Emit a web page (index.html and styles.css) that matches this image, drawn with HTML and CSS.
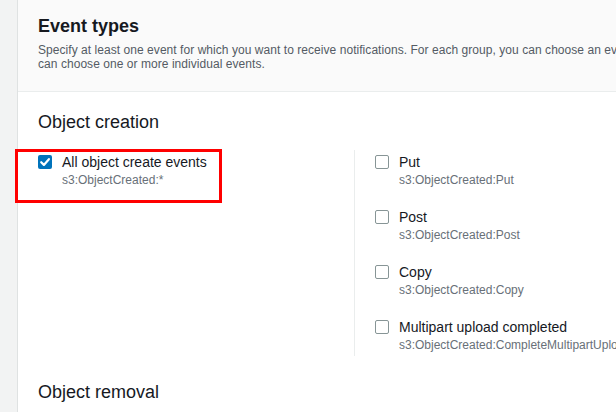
FILE: index.html
```html
<!DOCTYPE html>
<html>
<head>
<meta charset="utf-8">
<link rel="stylesheet" href="styles.css">
</head>
<body>
<div class="page">
  <div class="rail"></div>
  <div class="card">
    <div class="card-header">
      <h2 class="title">Event types</h2>
      <p class="desc">Specify at least one event for which you want to receive notifications. For each group, you can choose an event type for all events, or you<br>can choose one or more individual events.</p>
    </div>
    <div class="section">
      <h3 class="group-title">Object creation</h3>
      <div class="group-grid">
        <div class="col col-left">
          <div class="option highlighted">
            <span class="box checked"><svg width="14" height="14" viewBox="0 0 14 14"><polyline points="3.2,7.2 5.9,9.9 10.9,4.2" fill="none" stroke="#fff" stroke-width="2.2" stroke-linecap="round" stroke-linejoin="round"/></svg></span>
            <div class="text"><div class="label">All object create events</div><div class="sub">s3:ObjectCreated:*</div></div>
            <span class="annotation"></span>
          </div>
        </div>
        <div class="col col-right">
          <div class="option">
            <span class="box"></span>
            <div class="text"><div class="label">Put</div><div class="sub">s3:ObjectCreated:Put</div></div>
          </div>
          <div class="option">
            <span class="box"></span>
            <div class="text"><div class="label">Post</div><div class="sub">s3:ObjectCreated:Post</div></div>
          </div>
          <div class="option">
            <span class="box"></span>
            <div class="text"><div class="label">Copy</div><div class="sub">s3:ObjectCreated:Copy</div></div>
          </div>
          <div class="option">
            <span class="box"></span>
            <div class="text"><div class="label">Multipart upload completed</div><div class="sub">s3:ObjectCreated:CompleteMultipartUpload</div></div>
          </div>
        </div>
      </div>
      <h3 class="group-title next">Object removal</h3>
    </div>
  </div>
</div>
</body>
</html>
```
FILE: styles.css
```css
html, body {
  margin: 0;
  padding: 0;
  background: #ffffff;
  overflow: hidden;
}
body {
  font-family: "Liberation Sans", Arial, sans-serif;
  color: #16191f;
}
.page {
  display: flex;
  width: 616px;
  height: 412px;
  overflow: hidden;
}
.rail {
  width: 17px;
  flex: none;
  background: #f2f3f3;
  border-right: 1px solid #dfe2e2;
}
.card {
  flex: 1;
  min-width: 0;
  background: #ffffff;
}
.card-header {
  background: #fafafa;
  border-bottom: 1px solid #eaeded;
  padding: 15px 20px 20px 20px;
  white-space: nowrap;
}
.title {
  margin: 0 0 6px 0;
  font-size: 18px;
  line-height: 22px;
  font-weight: 700;
  color: #16191f;
}
.desc {
  margin: 0;
  font-size: 12px;
  line-height: 14px;
  color: #545b64;
  letter-spacing: 0.05px;
}
.section {
  padding: 19px 20px 0 20px;
  white-space: nowrap;
}
.group-title {
  margin: 0;
  font-size: 18px;
  line-height: 22px;
  font-weight: 400;
  color: #16191f;
}
.group-title.next {
  margin-top: 25px;
}
.group-grid {
  display: grid;
  grid-template-columns: 316px 1fr;
  margin-top: 17px;
}
.col {
  display: flex;
  flex-direction: column;
  gap: 19px;
  padding: 2px 0 3px 0;
}
.col-right {
  border-left: 1px solid #eaeded;
  padding-left: 20px;
}
.option {
  display: flex;
  align-items: flex-start;
  gap: 10px;
  position: relative;
}
.box {
  width: 14px;
  height: 14px;
  margin-top: 3px;
  flex: none;
  box-sizing: border-box;
  border: 1px solid #879596;
  border-radius: 2px;
  background: #ffffff;
  display: block;
}
.box.checked {
  border: none;
  background: #0073bb;
}
.box svg {
  display: block;
}
.label {
  font-size: 14px;
  line-height: 20px;
  color: #16191f;
}
.sub {
  font-size: 12px;
  line-height: 16px;
  color: #687078;
}
.annotation {
  position: absolute;
  left: -23px;
  top: -3px;
  width: 207px;
  height: 54px;
  box-sizing: border-box;
  border: 3px solid #ff0000;
  pointer-events: none;
}
```
